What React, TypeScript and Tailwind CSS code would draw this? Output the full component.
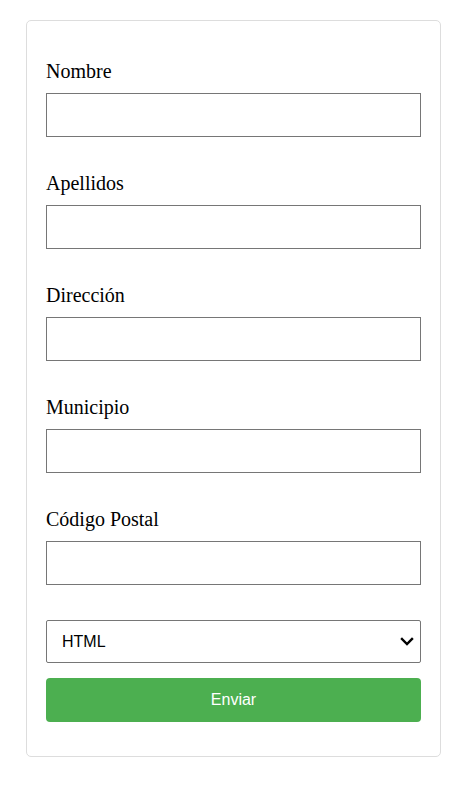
import React from "react";

const fields = ["Nombre", "Apellidos", "Dirección", "Municipio", "Código Postal"];

export default function App() {
  return (
    <div className="min-h-[787px] bg-white pt-[20px] pl-[26px]">
      <form
        className="flex w-[415px] flex-col rounded-[5px] border border-[#dddddd] bg-white px-[19px] pt-[39px] pb-[34px]"
        onSubmit={(e) => e.preventDefault()}
      >
        {fields.map((f, i) => (
          <div key={f} className={i === 0 ? "flex flex-col" : "mt-[35px] flex flex-col"}>
            <label
              className="block h-[23px] text-[20px] leading-[23px] text-black"
              style={{ fontFamily: '"Liberation Serif", "Times New Roman", serif' }}
            >
              {f}
            </label>
            <input
              type="text"
              className="mt-[10px] h-[44px] w-full border border-[#767676] bg-white px-[12px] outline-none"
            />
          </div>
        ))}
        <div className="relative mt-[35px] h-[43px] w-full">
          <select
            className="h-[43px] w-full appearance-none rounded-[2px] border border-[#767676] bg-white pl-[15px] text-[16px] text-black outline-none"
            style={{ fontFamily: '"Liberation Sans", Arial, sans-serif' }}
            defaultValue="HTML"
          >
            <option>HTML</option>
            <option>CSS</option>
            <option>JavaScript</option>
          </select>
          <svg
            className="pointer-events-none absolute right-[7px] top-[17px]"
            width="14"
            height="9"
            viewBox="0 0 14 9"
          >
            <path d="M2 2 L7 7 L12 2" fill="none" stroke="#000" strokeWidth="2.4" strokeLinecap="square" />
          </svg>
        </div>
        <button
          type="submit"
          className="mt-[15px] h-[44px] w-full rounded-[4px] bg-[#4caf50] text-[16px] text-white"
          style={{ fontFamily: '"Liberation Sans", Arial, sans-serif' }}
        >
          Enviar
        </button>
      </form>
    </div>
  );
}
